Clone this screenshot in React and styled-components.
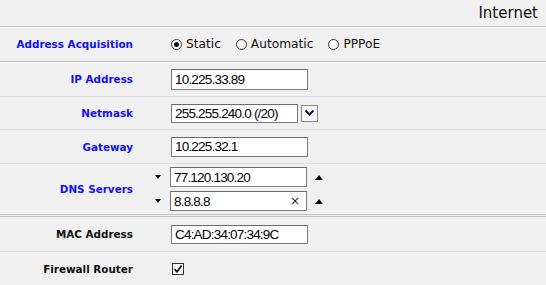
import React from "react"
import styled, { createGlobalStyle } from "styled-components"

const GlobalStyle = createGlobalStyle`
  html, body {
    margin: 0;
    padding: 0;
    background: #f0f0f0;
  }
`

const Page = styled.div`
  width: 546px;
  height: 285px;
  overflow: hidden;
  background: #f0f0f0;
  font-family: "DejaVu Sans", Verdana, sans-serif;
  color: #000;
`

const Header = styled.div`
  height: 27px;
  box-sizing: border-box;
  display: flex;
  justify-content: flex-end;
  align-items: flex-end;
  padding: 0 8px 4px 0;
  font-size: 15px;
  line-height: 18px;
  color: #111;
  border-bottom: 1px solid #bfbfbf;
  box-shadow: 0 1px 0 #fbfbfb;
  position: relative;
`

const sepStyles = {
  strong: "border-bottom: 1px solid #bfbfbf; box-shadow: 0 1px 0 #fbfbfb;",
  light: "border-bottom: 1px solid #dcdcdc;",
  double: "border-bottom: 3px double #c0c0c0;",
  none: "",
}

const Row = styled.div`
  display: grid;
  grid-template-columns: 150px 1fr;
  align-items: center;
  height: ${p => p.$h}px;
  ${p => sepStyles[p.$sep || "light"]}
`

const Label = styled.div`
  text-align: right;
  padding-right: 17px;
  font-size: 10.4px;
  font-weight: bold;
  color: ${p => (p.$plain ? "#111" : "#1010f4")};
`

const Value = styled.div`
  display: flex;
  flex-direction: column;
  gap: 4px;
  padding-left: ${p => (p.$flush ? 0 : 21)}px;
`

const Line = styled.div`
  display: flex;
  align-items: center;
`

const RadioGroup = styled.div`
  display: flex;
  align-items: center;
  gap: 15px;
  font-size: 12.2px;
  color: #111;
`

const RadioItem = styled.label`
  display: flex;
  align-items: center;
  gap: 4px;
`

const RadioDot = styled.span`
  width: 9px;
  height: 9px;
  border: 1px solid #333;
  border-radius: 50%;
  background: #fdfdfd;
  display: flex;
  align-items: center;
  justify-content: center;

  &::after {
    content: "";
    width: 5px;
    height: 5px;
    border-radius: 50%;
    background: ${p => (p.$on ? "#111" : "transparent")};
  }
`

const Field = styled.div`
  width: ${p => p.$w || 137}px;
  height: ${p => p.$hgt || 20}px;
  box-sizing: border-box;
  border: 1px solid #7a7a7a;
  border-top-color: #6c6c6c;
  background: #fff;
  display: flex;
  align-items: center;
`

const Input = styled.input`
  flex: 1;
  min-width: 0;
  border: none;
  outline: none;
  background: transparent;
  padding: 0 0 0 3px;
  font-family: "Liberation Sans", Arial, sans-serif;
  font-size: 13.5px;
  letter-spacing: -0.8px;
  color: #000;
`

const Clear = styled.span`
  width: 14px;
  margin-right: 4px;
  font-family: "DejaVu Sans", sans-serif;
  font-size: 12px;
  color: #1a1a3a;
  text-align: center;
`

const SelectWrap = styled.div`
  display: flex;
  align-items: center;
  gap: 3px;
`

const DropButton = styled.div`
  width: 17px;
  height: 17px;
  box-sizing: border-box;
  border: 1px solid #8a8a8a;
  background: #f7f7f7;
  display: flex;
  align-items: center;
  justify-content: center;
`

const ArrowSlot = styled.div`
  width: 20px;
  padding-left: 5px;
  box-sizing: border-box;
  display: flex;
  align-items: center;
`

const ArrowDown = styled.span`
  width: 0;
  height: 0;
  border-left: 3.5px solid transparent;
  border-right: 3.5px solid transparent;
  border-top: 4px solid #000;
`

const ArrowUp = styled.span`
  margin-left: 8px;
  width: 0;
  height: 0;
  border-left: 4.5px solid transparent;
  border-right: 4.5px solid transparent;
  border-bottom: 5px solid #000;
`

const CheckBox = styled.span`
  margin-left: 1px;
  width: 12px;
  height: 12px;
  box-sizing: border-box;
  border: 1px solid #333;
  background: #fff;
  display: flex;
  align-items: center;
  justify-content: center;
`

const radios = [
  { name: "Static", on: true },
  { name: "Automatic" },
  { name: "PPPoE" },
]

const dns = [
  { value: "77.120.130.20" },
  { value: "8.8.8.8", clear: true },
]

export default function App() {
  return (
    <Page>
      <GlobalStyle />
      <Header>Internet</Header>

      <Row $h={34} $sep="strong">
        <Label>Address Acquisition</Label>
        <Value>
          <RadioGroup>
            {radios.map(r => (
              <RadioItem key={r.name}>
                <RadioDot $on={r.on} />
                {r.name}
              </RadioItem>
            ))}
          </RadioGroup>
        </Value>
      </Row>

      <Row $h={34}>
        <Label>IP Address</Label>
        <Value>
          <Field $hgt={21}>
            <Input readOnly value="10.225.33.89" />
          </Field>
        </Value>
      </Row>

      <Row $h={32}>
        <Label>Netmask</Label>
        <Value>
          <SelectWrap>
            <Field $w={127} $hgt={19}>
              <Input readOnly value="255.255.240.0 (/20)" />
            </Field>
            <DropButton>
              <svg width="11" height="8" viewBox="0 0 11 8">
                <path d="M1.5 1.5 L5.5 5.5 L9.5 1.5" fill="none" stroke="#101840" strokeWidth="2" />
              </svg>
            </DropButton>
          </SelectWrap>
        </Value>
      </Row>

      <Row $h={33}>
        <Label>Gateway</Label>
        <Value>
          <Field $hgt={20}>
            <Input readOnly value="10.225.32.1" />
          </Field>
        </Value>
      </Row>

      <Row $h={50} $sep="double">
        <Label>DNS Servers</Label>
        <Value $flush>
          {dns.map(d => (
            <Line key={d.value}>
              <ArrowSlot>
                <ArrowDown />
              </ArrowSlot>
              <Field $hgt={20}>
                <Input readOnly value={d.value} />
                {d.clear && <Clear>×</Clear>}
              </Field>
              <ArrowUp />
            </Line>
          ))}
        </Value>
      </Row>

      <Row $h={34}>
        <Label $plain>MAC Address</Label>
        <Value>
          <Field $hgt={19}>
            <Input readOnly value="C4:AD:34:07:34:9C" />
          </Field>
        </Value>
      </Row>

      <Row $h={33} $sep="none">
        <Label $plain>Firewall Router</Label>
        <Value>
          <CheckBox>
            <svg width="10" height="10" viewBox="0 0 10 10">
              <path d="M1.5 5 L4 7.8 L8.6 1.5" fill="none" stroke="#101840" strokeWidth="1.8" />
            </svg>
          </CheckBox>
        </Value>
      </Row>
    </Page>
  )
}
